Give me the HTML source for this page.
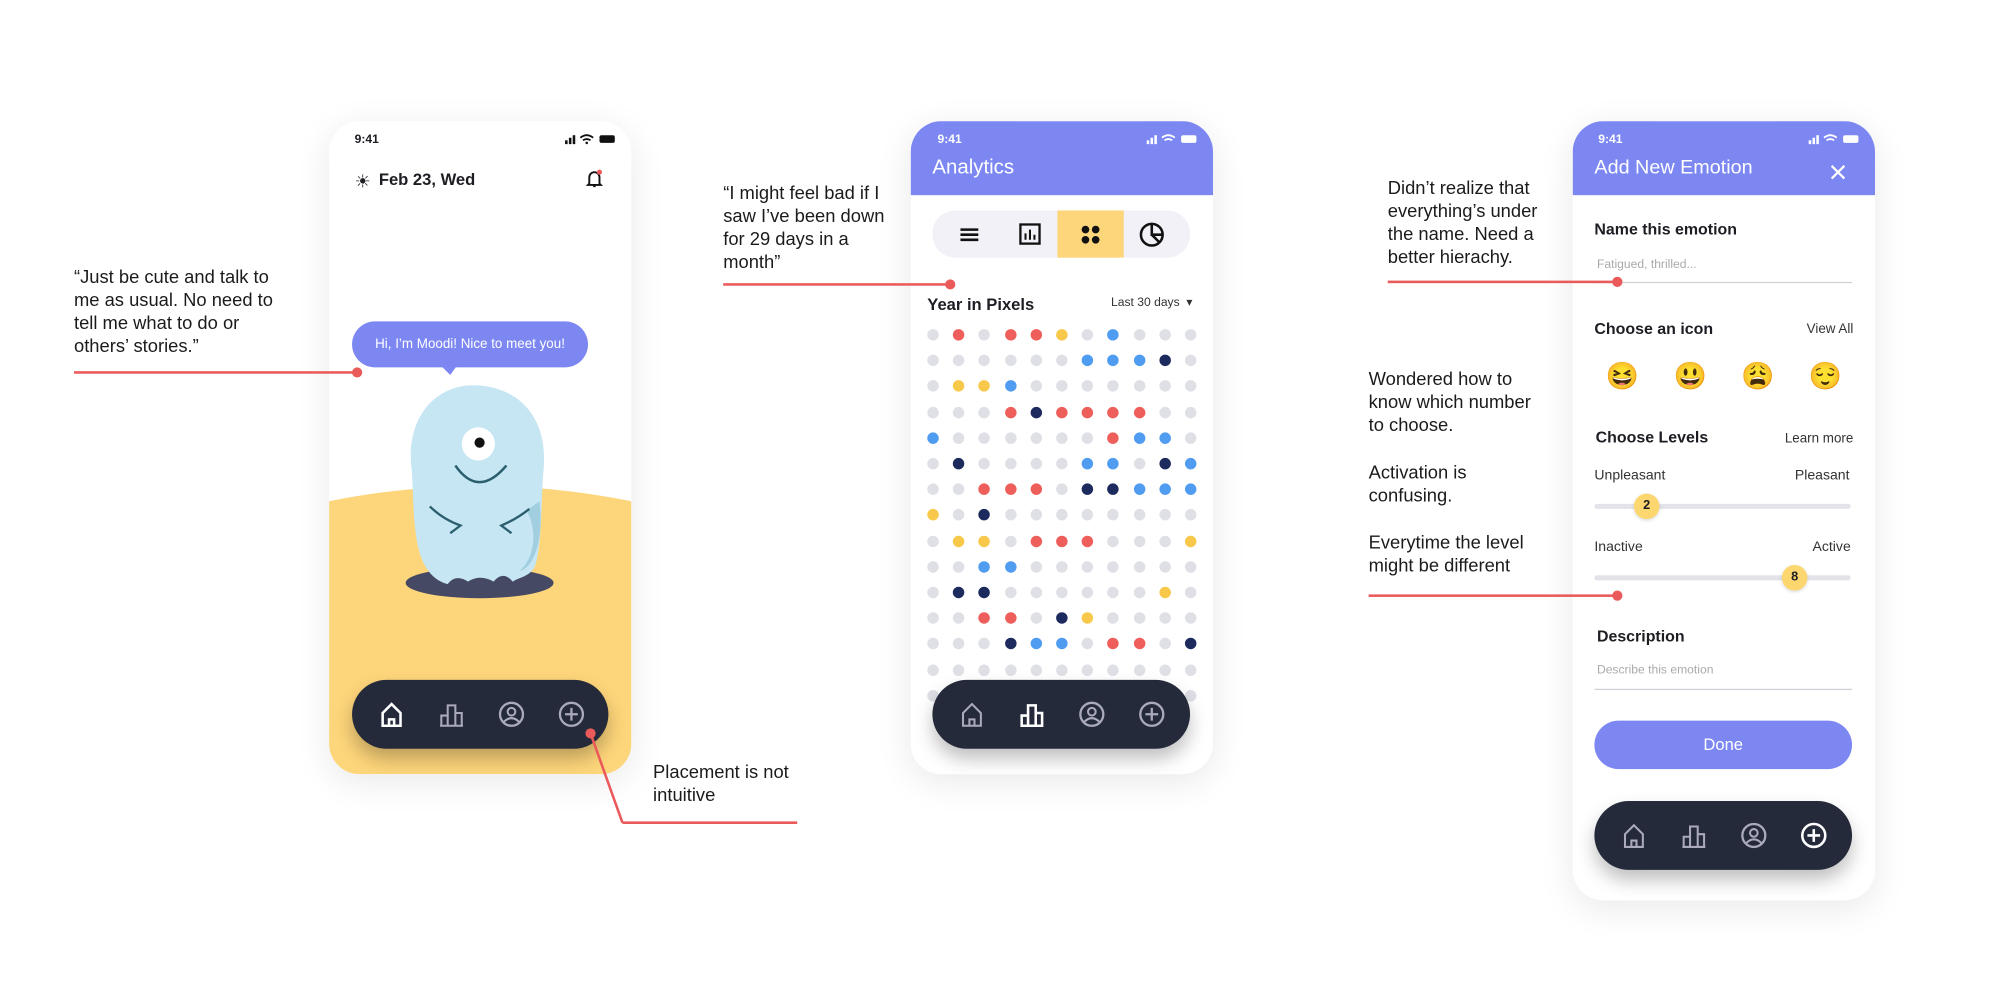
<!DOCTYPE html>
<html><head><meta charset="utf-8">
<style>
*{margin:0;padding:0;box-sizing:border-box}
html,body{width:2000px;height:982px;overflow:hidden;background:#fff;font-family:"Liberation Sans",sans-serif;color:#1d1d24}
#w{position:absolute;left:0;top:0;width:1568px;height:770px;transform:scale(1.27551);transform-origin:0 0}
.a{position:absolute}
.ph{position:absolute;background:#fff;border-radius:24px;overflow:hidden;box-shadow:0 6px 28px rgba(0,0,0,.09)}
.note{position:absolute;font-size:14.4px;line-height:18px;color:#1b1b1b}
.rl{position:absolute;height:2px;background:#ea5a5a}
.dot{position:absolute;width:8px;height:8px;border-radius:50%;background:#ea5a5a}
.st{position:absolute;font-size:9.5px;font-weight:bold}
.nav{position:absolute;height:54px;border-radius:27px;background:#252a3a;box-shadow:0 8px 14px rgba(0,0,0,.25)}
.nav svg{position:absolute;top:16px}
.hd{position:absolute;left:0;top:0;width:237px;height:58px;background:#7c87f2}
.b{font-weight:bold}
.lab{position:absolute;font-size:11px;color:#333}
.hr{position:absolute;height:1px;background:#d0d0d6}
.sl{position:absolute;height:4px;border-radius:2px;background:#e3e3ea}
.kn{position:absolute;width:20px;height:20px;border-radius:50%;background:#fcd770;font-size:10px;font-weight:bold;text-align:center;line-height:20px;box-shadow:0 1px 3px rgba(0,0,0,.15)}
.pd{position:absolute;width:9px;height:9px;border-radius:50%}
</style></head><body>
<div id="w">
<!-- annotation text -->
<div class="note" style="left:58px;top:209px">“Just be cute and talk to<br>me as usual. No need to<br>tell me what to do or<br>others’ stories.”</div>
<div class="note" style="left:512px;top:597px">Placement is not<br>intuitive</div>
<div class="note" style="left:567px;top:143px">“I might feel bad if I<br>saw I’ve been down<br>for 29 days in a<br>month”</div>
<div class="note" style="left:1088px;top:139px">Didn’t realize that<br>everything’s under<br>the name. Need a<br>better hierachy.</div>
<div class="note" style="left:1073px;top:289px">Wondered how to<br>know which number<br>to choose.</div>
<div class="note" style="left:1073px;top:362px">Activation is<br>confusing.</div>
<div class="note" style="left:1073px;top:417px">Everytime the level<br>might be different</div>

<!-- phone 1 -->
<div class="ph" style="left:258px;top:95px;width:237px;height:512px">
 <div class="st" style="left:20px;top:9px">9:41</div>
 <svg class="a" style="left:184px;top:9px" width="42" height="10"><rect x="1" y="6" width="2" height="3" fill="#111"/><rect x="4" y="4" width="2" height="5" fill="#111"/><rect x="7" y="2" width="2" height="7" fill="#111"/><path d="M13 4q5-4 10 0M15 6q3-2 6 0" stroke="#111" stroke-width="1.4" fill="none"/><circle cx="18" cy="8" r="1" fill="#111"/><rect x="28" y="2" width="12" height="6" rx="1.5" fill="#111"/></svg>
 <div class="a" style="left:20px;top:39px;font-size:14px">☀</div>
 <div class="a b" style="left:39px;top:38px;font-size:13px">Feb 23, Wed</div>
 <svg class="a" style="left:200px;top:37px" width="16" height="16"><path d="M4 12V7a4 4 0 0 1 8 0v5l1 1H3z M7 14h2" stroke="#111" stroke-width="1.5" fill="none"/><circle cx="12" cy="3" r="2" fill="#ea5a5a"/></svg>
 <svg class="a" style="left:0;top:280px" width="237" height="232"><path d="M0 18Q118 -6 237 18V232H0z" fill="#fdd57a"/></svg>
 <div class="a" style="left:18px;top:157px;width:185px;height:36px;border-radius:18px;background:#7c87f2;color:#fff;font-size:10.5px;line-height:36px;text-align:center">Hi, I’m Moodi! Nice to meet you!</div>
 <svg class="a" style="left:88px;top:192px" width="12" height="8"><path d="M0 0h12L7 7z" fill="#7c87f2"/></svg>
 <svg class="a" style="left:55px;top:205px" width="130" height="175"><ellipse cx="63" cy="157" rx="58" ry="12" fill="#464963"/><path d="M10 70C4 28 28 2 58 2s60 20 55 68c-2 25 -1 55 -6 72 -3 10-12 10-18 14-5-6-10-6-15 0-7-4-14-4-20 0-6-4-12-4-16 2C10 150 12 110 10 70z" fill="#c5e6f2"/><path d="M100 100c10 20 4 40-6 48 14-4 19-30 16-55z" fill="#a2cfe0"/><circle cx="62" cy="48" r="13" fill="#fff"/><circle cx="63" cy="47" r="4" fill="#111"/><path d="M44 65q18 26 40 0" stroke="#2c5f6e" stroke-width="2" fill="none"/><path d="M24 97q10 10 24 15l-8 6M102 99q-10 8-22 13l8 6" stroke="#2c5f6e" stroke-width="1.8" fill="none"/></svg>
 <div class="nav" style="left:18px;top:438px;width:201px">
  <svg style="left:20px" width="22" height="22"><path d="M4 20V10l7-7 7 7v10zM9 20v-5h4v5" stroke="#fff" stroke-width="2" fill="none"/></svg>
  <svg style="left:67px" width="22" height="22"><path d="M2 20h18M3 20v-8h5v8M8 20V4h6v16M14 20v-10h5v10" stroke="#aab" stroke-width="1.6" fill="none"/></svg>
  <svg style="left:114px" width="22" height="22"><circle cx="11" cy="11" r="9" stroke="#aab" stroke-width="1.8" fill="none"/><circle cx="11" cy="9" r="3" stroke="#aab" stroke-width="1.6" fill="none"/><path d="M5 17q6-6 12 0" stroke="#aab" stroke-width="1.6" fill="none"/></svg>
  <svg style="left:161px" width="22" height="22"><circle cx="11" cy="11" r="9" stroke="#aab" stroke-width="1.8" fill="none"/><path d="M11 6v10M6 11h10" stroke="#aab" stroke-width="1.8"/></svg>
 </div>
</div>

<!-- phone 2 -->
<div class="ph" style="left:714px;top:95px;width:237px;height:512px">
 <div class="hd"></div>
 <div class="st" style="left:21px;top:9px;color:#fff">9:41</div>
 <svg class="a" style="left:184px;top:9px" width="42" height="10"><rect x="1" y="6" width="2" height="3" fill="#fff"/><rect x="4" y="4" width="2" height="5" fill="#fff"/><rect x="7" y="2" width="2" height="7" fill="#fff"/><path d="M13 4q5-4 10 0M15 6q3-2 6 0" stroke="#fff" stroke-width="1.4" fill="none"/><rect x="28" y="2" width="12" height="6" rx="1.5" fill="#fff"/></svg>
 <div class="a" style="left:17px;top:28px;color:#fff;font-size:16px">Analytics</div>
 <div class="a" style="left:17px;top:70px;width:202px;height:37px;border-radius:18px;background:#f1f1f7"></div>
 <div class="a" style="left:115px;top:70px;width:52px;height:37px;background:#fdd57a"></div>
 <svg class="a" style="left:37px;top:80px" width="18" height="18"><path d="M2 5h14M2 9h14M2 13h14" stroke="#111" stroke-width="2"/></svg>
 <svg class="a" style="left:84px;top:79px" width="19" height="19"><rect x="2" y="2" width="15" height="15" stroke="#111" stroke-width="1.8" fill="none"/><path d="M6 14V9M9.5 14V6M13 14v-4" stroke="#111" stroke-width="1.6"/></svg>
 <svg class="a" style="left:132px;top:80px" width="18" height="18"><circle cx="5" cy="5" r="3" fill="#111"/><circle cx="13" cy="5" r="3" fill="#111"/><circle cx="5" cy="13" r="3" fill="#111"/><circle cx="13" cy="13" r="3" fill="#111"/></svg>
 <svg class="a" style="left:178px;top:78px" width="22" height="22"><circle cx="11" cy="11" r="8.5" stroke="#111" stroke-width="2" fill="none"/><path d="M11 2.5V11h8.5M11 11l6 6" stroke="#111" stroke-width="2" fill="none"/></svg>
 <div class="a b" style="left:13px;top:136px;font-size:13px">Year in Pixels</div>
 <div class="a" style="left:157px;top:137px;font-size:9.5px;color:#333">Last 30 days&nbsp; ▾</div>
 <div id="grid"></div>
 <div class="nav" style="left:17px;top:438px;width:202px">
  <svg style="left:20px" width="22" height="22"><path d="M4 20V10l7-7 7 7v10zM9 20v-5h4v5" stroke="#aab" stroke-width="1.6" fill="none"/></svg>
  <svg style="left:67px" width="22" height="22"><path d="M2 20h18M3 20v-8h5v8M8 20V4h6v16M14 20v-10h5v10" stroke="#fff" stroke-width="2" fill="none"/></svg>
  <svg style="left:114px" width="22" height="22"><circle cx="11" cy="11" r="9" stroke="#aab" stroke-width="1.8" fill="none"/><circle cx="11" cy="9" r="3" stroke="#aab" stroke-width="1.6" fill="none"/><path d="M5 17q6-6 12 0" stroke="#aab" stroke-width="1.6" fill="none"/></svg>
  <svg style="left:161px" width="22" height="22"><circle cx="11" cy="11" r="9" stroke="#aab" stroke-width="1.8" fill="none"/><path d="M11 6v10M6 11h10" stroke="#aab" stroke-width="1.8"/></svg>
 </div>
</div>

<!-- phone 3 -->
<div class="ph" style="left:1233px;top:95px;width:237px;height:611px">
 <div class="hd"></div>
 <div class="st" style="left:20px;top:9px;color:#fff">9:41</div>
 <svg class="a" style="left:184px;top:9px" width="42" height="10"><rect x="1" y="6" width="2" height="3" fill="#fff"/><rect x="4" y="4" width="2" height="5" fill="#fff"/><rect x="7" y="2" width="2" height="7" fill="#fff"/><path d="M13 4q5-4 10 0M15 6q3-2 6 0" stroke="#fff" stroke-width="1.4" fill="none"/><rect x="28" y="2" width="12" height="6" rx="1.5" fill="#fff"/></svg>
 <div class="a" style="left:17px;top:28px;color:#fff;font-size:15.5px">Add New Emotion</div>
 <svg class="a" style="left:202px;top:34px" width="12" height="12"><path d="M1 1l10 10M11 1L1 11" stroke="#fff" stroke-width="1.8"/></svg>
 <div class="a b" style="left:17px;top:78px;font-size:12.5px">Name this emotion</div>
 <div class="a" style="left:19px;top:107px;font-size:9.5px;color:#aaa">Fatigued, thrilled...</div>
 <div class="hr" style="left:17px;top:126px;width:202px"></div>
 <div class="a b" style="left:17px;top:156px;font-size:12.5px">Choose an icon</div>
 <div class="lab" style="right:17px;top:157px;font-size:10.5px">View All</div>
 <div class="a" style="left:26px;top:189px;font-size:21px;line-height:24px;font-family:'Noto Color Emoji','DejaVu Sans',sans-serif;width:200px">
  <span class="a" style="left:0">😆</span><span class="a" style="left:53px">😃</span><span class="a" style="left:106px">😩</span><span class="a" style="left:159px">😌</span></div>
 <div class="a b" style="left:18px;top:241px;font-size:12.5px">Choose Levels</div>
 <div class="lab" style="right:17px;top:243px;font-size:10.5px">Learn more</div>
 <div class="lab" style="left:17px;top:272px">Unpleasant</div>
 <div class="lab" style="right:20px;top:272px">Pleasant</div>
 <div class="sl" style="left:17px;top:300px;width:201px"></div>
 <div class="kn" style="left:48px;top:292px">2</div>
 <div class="lab" style="left:17px;top:328px">Inactive</div>
 <div class="lab" style="right:19px;top:328px">Active</div>
 <div class="sl" style="left:17px;top:356px;width:201px"></div>
 <div class="kn" style="left:164px;top:348px">8</div>
 <div class="a b" style="left:19px;top:397px;font-size:12.5px">Description</div>
 <div class="a" style="left:19px;top:425px;font-size:9.5px;color:#aaa">Describe this emotion</div>
 <div class="hr" style="left:17px;top:445px;width:202px"></div>
 <div class="a" style="left:17px;top:470px;width:202px;height:38px;border-radius:19px;background:#7c87f2;color:#fff;font-size:13px;text-align:center;line-height:38px">Done</div>
 <div class="nav" style="left:17px;top:533px;width:202px">
  <svg style="left:20px" width="22" height="22"><path d="M4 20V10l7-7 7 7v10zM9 20v-5h4v5" stroke="#aab" stroke-width="1.6" fill="none"/></svg>
  <svg style="left:67px" width="22" height="22"><path d="M2 20h18M3 20v-8h5v8M8 20V4h6v16M14 20v-10h5v10" stroke="#aab" stroke-width="1.6" fill="none"/></svg>
  <svg style="left:114px" width="22" height="22"><circle cx="11" cy="11" r="9" stroke="#aab" stroke-width="1.8" fill="none"/><circle cx="11" cy="9" r="3" stroke="#aab" stroke-width="1.6" fill="none"/><path d="M5 17q6-6 12 0" stroke="#aab" stroke-width="1.6" fill="none"/></svg>
  <svg style="left:161px" width="22" height="22"><circle cx="11" cy="11" r="9" stroke="#fff" stroke-width="2" fill="none"/><path d="M11 6v10M6 11h10" stroke="#fff" stroke-width="2"/></svg>
 </div>
</div>

<!-- annotation lines on top -->
<div class="rl" style="left:58px;top:291px;width:222px"></div><div class="dot" style="left:276px;top:288px"></div>
<svg class="a" style="left:455px;top:568px" width="175" height="82"><line x1="8" y1="7" x2="33" y2="77" stroke="#ea5a5a" stroke-width="2"/><line x1="33" y1="77" x2="170" y2="77" stroke="#ea5a5a" stroke-width="2"/></svg>
<div class="dot" style="left:459px;top:571px"></div>
<div class="rl" style="left:567px;top:222px;width:178px"></div><div class="dot" style="left:741px;top:219px"></div>
<div class="rl" style="left:1088px;top:220px;width:180px"></div><div class="dot" style="left:1264px;top:217px"></div>
<div class="rl" style="left:1073px;top:466px;width:195px"></div><div class="dot" style="left:1264px;top:463px"></div>
</div>
<script>
var rows=["grgrrygbggg","ggggggbbbng","gyybggggggg","gggrnrrrrgg","bggggggrbbg","gnggggbbgnb","ggrrrgnnbbb","ygngggggggg","gyygrrrgggy","ggbbggggggg","gnnggggggyg","ggrrgnygggg","gggnbbgrrgn","ggggggggggg","ggggggggggg"];
var c={g:"#dfdfe6",r:"#ee5f5b",y:"#f8c84a",b:"#4f9cf0",n:"#1c2a5e"};
var h="";rows.forEach(function(r,i){for(var j=0;j<11;j++){h+='<div class="pd" style="left:'+(13+j*20.2)+'px;top:'+(163+i*20.2)+'px;background:'+c[r[j]]+'"></div>';}});
document.getElementById("grid").innerHTML=h;
</script>
</body></html>
